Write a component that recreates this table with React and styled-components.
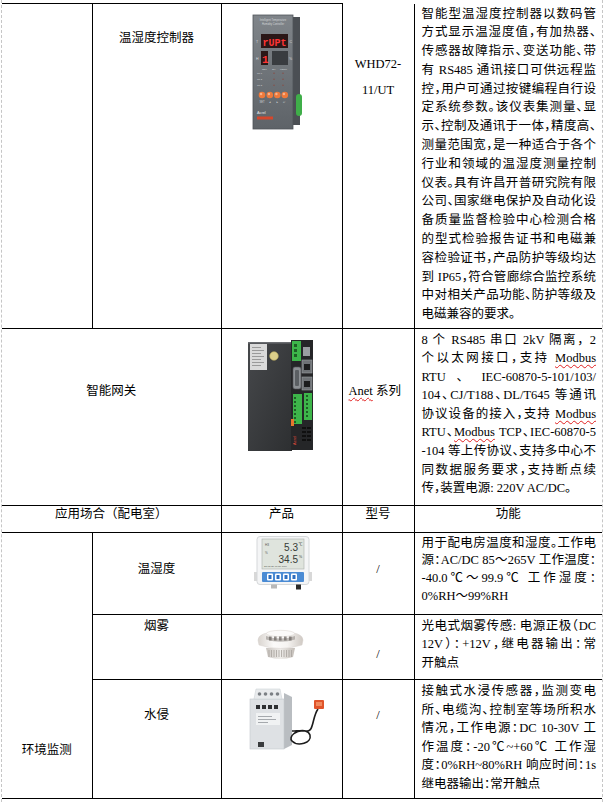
import React from "react";
import styled, { createGlobalStyle } from "styled-components";

const GlobalStyle = createGlobalStyle`
  html, body {
    margin: 0;
    padding: 0;
    background: #ffffff;
  }
  body {
    font-family: "Liberation Serif", "Noto Sans CJK SC", serif;
    color: #000;
  }
`;

const Page = styled.div`
  box-sizing: border-box;
  width: 602px;
  height: 802px;
  margin-left: 1px;
  padding-top: 3px;
  border-left: 1px dashed #c6c6c6;
  border-right: 1px dashed #c6c6c6;
  overflow: hidden;
`;

const Sheet = styled.table`
  width: 600px;
  border-collapse: collapse;
  table-layout: fixed;
  font-size: 12.5px;
`;

const Col = styled.col`
  width: ${(p) => p.$w}px;
`;

const Row = styled.tr`
  height: ${(p) => p.$h}px;
`;

const Cell = styled.td`
  padding: ${(p) => p.$pt || 0}px 0 0 ${(p) => p.$pl || 0}px;
  border-top: ${(p) => (p.$noTop ? "none" : "1px solid #000")};
  border-left: ${(p) => (p.$noLeft ? "none" : "1px solid #000")};
  border-right: ${(p) => (p.$noRight ? "none" : "1px solid #000")};
  border-bottom: 1px solid #000;
  vertical-align: top;
  text-align: ${(p) => p.$align || "center"};
  line-height: ${(p) => p.$lh || 18}px;
`;

const Desc = styled(Cell)`
  padding-left: 7px;
  padding-right: 6px;
  text-align: left;
  font-feature-settings: "halt";
`;

const Line = styled.div`
  text-align: justify;
  text-align-last: ${(p) => (p.$last ? "start" : "justify")};
`;

const Squiggle = styled.span`
  text-decoration: underline wavy #e02020;
  text-decoration-thickness: 1px;
  text-underline-offset: 2px;
`;

const Pic = styled.svg`
  display: block;
`;

function Lines({ items }) {
  return items.map((item, i) => (
    <Line key={i} $last={i === items.length - 1}>
      {item}
    </Line>
  ));
}

const M = () => <Squiggle>Modbus</Squiggle>;

function ControllerPic() {
  const tiny = { fontFamily: "Liberation Sans", fill: "#d4d7da" };
  return (
    <Pic width="50" height="116" viewBox="0 0 50 116">
      <defs>
        <linearGradient id="ctlFace" x1="0" y1="0" x2="0" y2="1">
          <stop offset="0" stopColor="#80858a" />
          <stop offset="1" stopColor="#5e6368" />
        </linearGradient>
      </defs>
      <rect x="39" y="3" width="9" height="108" fill="#4b4f54" />
      <rect x="44" y="80" width="6" height="22" rx="3" fill="#3fae49" />
      <rect x="1" y="1" width="40" height="114" fill="url(#ctlFace)" stroke="#4f5459" strokeWidth="0.8" />
      <text x="21" y="7" fontSize="2.6" textAnchor="middle" style={tiny}>Intelligent Temperature</text>
      <text x="21" y="10.5" fontSize="2.6" textAnchor="middle" style={tiny}>Humidity Controller</text>
      <rect x="9" y="20" width="27" height="14" fill="#2b1717" />
      <text x="10.5" y="31.5" fontSize="11.5" fontWeight="700" fill="#ff3434" fontFamily="Liberation Mono" textLength="24" lengthAdjust="spacingAndGlyphs">rUPt</text>
      <text x="4" y="29" fontSize="3.5" style={tiny}>T</text>
      <text x="37.5" y="29" fontSize="3.5" style={tiny}>C</text>
      <rect x="9" y="37" width="7" height="14" fill="#2b1717" />
      <text x="10" y="48.5" fontSize="11" fontWeight="700" fill="#ff3434" fontFamily="Liberation Mono">1</text>
      <rect x="20" y="37" width="16" height="14" fill="#393c40" />
      <text x="4" y="46" fontSize="3.5" style={tiny}>H</text>
      <text x="37" y="46" fontSize="3.5" style={tiny}>%</text>
      <text x="10" y="56" fontSize="2.4" style={tiny}>SET</text>
      <text x="20" y="56" fontSize="2.4" style={tiny}>Sel</text>
      <text x="28" y="56" fontSize="2.4" style={tiny}>MENU</text>
      {[60, 66, 72].map((y, i) => (
        <g key={y}>
          <text x="5" y={y} fontSize="2.4" style={tiny}>{`Ch ${i + 1}`}</text>
          <circle cx="22" cy={y - 0.8} r="0.7" fill="#8a4b43" />
          <circle cx="31" cy={y - 0.8} r="0.7" fill="#8a4b43" />
        </g>
      ))}
      {[10, 17.8, 25.3, 32.8].map((cx) => (
        <g key={cx}>
          <circle cx={cx} cy="81" r="3.3" fill="#ef7a3b" />
          <circle cx={cx - 0.9} cy="80" r="1.2" fill="#f8b38c" />
        </g>
      ))}
      <text x="7.5" y="89" fontSize="2.6" style={tiny}>SET</text>
      <text x="16.5" y="89" fontSize="2.6" style={tiny}>◄</text>
      <text x="24" y="89" fontSize="2.6" style={tiny}>►</text>
      <text x="31" y="89" fontSize="2.6" style={tiny}>↵</text>
      <text x="5" y="100" fontSize="3.8" fill="#eaeaea" fontFamily="Liberation Sans">Acrel</text>
      <rect x="5" y="102.5" width="16" height="3" fill="#d5472c" />
    </Pic>
  );
}

function GatewayPic() {
  return (
    <Pic width="66" height="114" viewBox="0 0 66 114">
      <defs>
        <linearGradient id="gwFace" x1="0" y1="0" x2="1" y2="1">
          <stop offset="0" stopColor="#46484b" />
          <stop offset="1" stopColor="#2d2f31" />
        </linearGradient>
      </defs>
      <rect x="1" y="3" width="44" height="109" fill="url(#gwFace)" />
      <rect x="1" y="3" width="44" height="1.5" fill="#6a6c70" />
      <rect x="44" y="1" width="22" height="110" fill="#252628" />
      <rect x="3" y="5" width="17" height="26" fill="#dadada" />
      {[8, 11, 14, 17, 20, 23, 26].map((y) => (
        <rect key={y} x="5" y={y} width={y % 2 ? 12 : 9} height="1" fill="#9a9a9a" />
      ))}
      <circle cx="27" cy="17" r="4.3" fill="#dccf8a" stroke="#b5a65a" strokeWidth="0.6" />
      <rect x="45" y="2" width="9" height="20" fill="#3db54a" />
      {[5, 10, 15].map((y) => (
        <rect key={y} x="47" y={y} width="3" height="3" fill="#1d5f25" />
      ))}
      <rect x="46" y="28" width="8" height="22" rx="2" fill="#8c9094" stroke="#505356" strokeWidth="0.6" />
      <rect x="48" y="31" width="4" height="16" rx="1" fill="#5b5f63" />
      <rect x="46" y="55" width="9" height="30" fill="#3db54a" />
      {[58, 62, 66, 70, 74, 78, 82].map((y) => (
        <rect key={y} x="47" y={y} width="2" height="2" fill="#1d5f25" />
      ))}
      <rect x="44" y="80" width="3" height="7" fill="#e8762e" />
      <rect x="56" y="8" width="7" height="9" fill="#9a9ea2" />
      <rect x="55" y="21" width="10" height="13" fill="#6e7276" stroke="#9a9ea2" strokeWidth="0.6" />
      <rect x="57" y="25" width="6" height="6" fill="#1b1c1d" />
      <rect x="55" y="38" width="10" height="13" fill="#6e7276" stroke="#9a9ea2" strokeWidth="0.6" />
      <rect x="57" y="42" width="6" height="6" fill="#1b1c1d" />
      <rect x="57" y="54" width="8" height="27" fill="#3db54a" />
      {[56, 60, 64, 68, 72, 76].map((y) => (
        <rect key={y} x="59" y={y} width="2" height="2" fill="#1d5f25" />
      ))}
      {[88, 92, 96, 100].map((y) => (
        <g key={y}>
          <rect x="55" y={y} width="4" height="2" fill="#101010" />
          <rect x="60" y={y} width="4" height="2" fill="#101010" />
        </g>
      ))}
      <text x="49" y="106" fontSize="4" fill="#e04a3a" fontFamily="Liberation Sans" transform="rotate(-90 49 106)">Acrel</text>
    </Pic>
  );
}

function ThermoPic() {
  return (
    <Pic width="58" height="54" viewBox="0 0 58 54">
      <rect x="0" y="36" width="3" height="9" fill="#d8d8d8" />
      <rect x="55" y="36" width="3" height="9" fill="#d8d8d8" />
      <rect x="3" y="0.5" width="52" height="48" rx="3" fill="#f4f5f6" stroke="#d5d8da" />
      <rect x="8" y="3" width="42" height="30" fill="#dfe4dd" stroke="#aab0aa" strokeWidth="0.6" />
      <text x="11" y="10" fontSize="3.2" fill="#555" fontFamily="Liberation Sans">H3</text>
      <text x="11" y="18" fontSize="3" fill="#555" fontFamily="Liberation Sans">%</text>
      <text x="44" y="15" fontSize="10" textAnchor="end" fill="#363b36" fontFamily="Liberation Sans">5.3</text>
      <text x="44.5" y="9.5" fontSize="4" fill="#363b36" fontFamily="Noto Sans CJK SC">℃</text>
      <text x="44" y="27" fontSize="10" textAnchor="end" fill="#363b36" fontFamily="Liberation Sans">34.5</text>
      <text x="45" y="21.5" fontSize="3.5" fill="#363b36" fontFamily="Liberation Sans">%</text>
      <text x="10" y="31" fontSize="2.5" fill="#555" fontFamily="Liberation Sans">25-12-20 07:50 RTU</text>
      <rect x="8" y="36" width="42" height="10" rx="1" fill="#4a8bd4" />
      {[13, 21, 29, 37].map((x) => (
        <g key={x}>
          <rect x={x} y="37.5" width="6" height="7" rx="1" fill="#ffffff" />
          <rect x={x + 1.5} y="39" width="3" height="4" fill="#2f6fc0" />
        </g>
      ))}
      <rect x="17" y="48.5" width="6" height="4" fill="#b8b8b8" />
      <rect x="42" y="48.5" width="5" height="5" fill="#2a2a2a" />
    </Pic>
  );
}

function SmokePic() {
  return (
    <Pic width="49" height="34" viewBox="0 0 49 34">
      <defs>
        <linearGradient id="dome" x1="0" y1="0" x2="1" y2="0">
          <stop offset="0" stopColor="#d9d4cf" />
          <stop offset="0.35" stopColor="#fbfaf9" />
          <stop offset="0.65" stopColor="#f6f4f2" />
          <stop offset="1" stopColor="#cfc9c3" />
        </linearGradient>
        <linearGradient id="base" x1="0" y1="0" x2="1" y2="0">
          <stop offset="0" stopColor="#c9c4bf" />
          <stop offset="0.5" stopColor="#eeece9" />
          <stop offset="1" stopColor="#c2bcb6" />
        </linearGradient>
      </defs>
      <path d="M10 21 L39 21 L37 30 Q24.5 34 12 30 Z" fill="url(#base)" />
      {[13, 15.5, 18, 20.5, 23, 25.5, 28, 30.5, 33, 35.5].map((x) => (
        <line key={x} x1={x} y1="23" x2={x} y2="30" stroke="#a8a39e" strokeWidth="0.8" />
      ))}
      <path d="M2 13 Q2 5 24.5 4.5 Q47 5 47 13 L46 18 Q24.5 25 3 18 Z" fill="url(#dome)" stroke="#d6d1cc" strokeWidth="0.5" />
      <ellipse cx="24.5" cy="6.5" rx="14" ry="3.2" fill="#fbfaf9" stroke="#ddd8d3" strokeWidth="0.6" />
      <path d="M10 9 Q24.5 14 39 9 L39 12.5 Q24.5 17 10 12.5 Z" fill="#8f8a85" opacity="0.55" />
      {[13, 18, 23, 28, 33].map((x) => (
        <rect key={x} x={x} y="9.5" width="2.6" height="4" fill="#6f6a66" opacity="0.75" />
      ))}
    </Pic>
  );
}

function FloodPic() {
  return (
    <Pic width="77" height="64" viewBox="0 0 77 64">
      <polygon points="36,6 44,10 44,58 36,62" fill="#b9bdc1" />
      <rect x="2" y="12" width="34" height="50" fill="#dee1e4" stroke="#c4c8cc" strokeWidth="0.6" />
      <polygon points="6,12 8,2 32,2 34,12" fill="#e9ebed" stroke="#cfd3d6" strokeWidth="0.6" />
      {[12, 18, 24, 30].map((x) => (
        <circle key={x} cx={x - 0.5} cy="7" r="1.8" fill="#7c8085" />
      ))}
      {[8, 14, 20, 26].map((x) => (
        <rect key={x} x={x} y="18" width="4" height="4" fill="#2d2f31" />
      ))}
      <rect x="8" y="26" width="24" height="12" fill="#f0f2f3" />
      <rect x="10" y="29" width="14" height="1" fill="#a5a9ad" />
      <rect x="10" y="32" width="18" height="1" fill="#a5a9ad" />
      <rect x="10" y="35" width="10" height="1" fill="#a5a9ad" />
      <rect x="10" y="55" width="6" height="5" fill="#3a3c3e" />
      <path d="M44 44 C52 44 60 42 62 48 C64 56 50 60 44 54 C40 50 48 42 58 44 C66 46 64 30 70 22" stroke="#1c1c1c" strokeWidth="1.6" fill="none" />
      <rect x="66" y="13" width="10" height="9" rx="1" fill="#e0542a" />
      <rect x="68" y="15" width="6" height="4" fill="#f08a5e" />
    </Pic>
  );
}

export default function App() {
  return (
    <>
      <GlobalStyle />
      <Page>
        <Sheet>
          <colgroup>
            <Col $w={90} />
            <Col $w={129} />
            <Col $w={121} />
            <Col $w={72} />
            <Col $w={188} />
          </colgroup>
          <tbody>
            <Row $h={325}>
              <Cell $noLeft />
              <Cell $pt={25}>温湿度控制器</Cell>
              <Cell $align="left" $pt={10} $pl={30}>
                <ControllerPic />
              </Cell>
              <Cell $noTop $pt={47} $lh={26.7}>
                WHD72-
                <br />
                11/UT
              </Cell>
              <Desc $noTop $noRight $pt={1} $lh={18.8}>
                <Lines
                  items={[
                    "智能型温湿度控制器以数码管",
                    "方式显示温湿度值，有加热器、",
                    "传感器故障指示、变送功能、带",
                    "有 RS485 通讯接口可供远程监",
                    "控，用户可通过按键编程自行设",
                    "定系统参数。该仪表集测量、显",
                    "示、控制及通讯于一体，精度高、",
                    "测量范围宽，是一种适合于各个",
                    "行业和领域的温湿度测量控制",
                    "仪表。具有许昌开普研究院有限",
                    "公司、国家继电保护及自动化设",
                    "备质量监督检验中心检测合格",
                    "的型式检验报告证书和电磁兼",
                    "容检验证书，产品防护等级均达",
                    "到 IP65，符合管廊综合监控系统",
                    "中对相关产品功能、防护等级及",
                    "电磁兼容的要求。",
                  ]}
                />
              </Desc>
            </Row>
            <Row $h={177}>
              <Cell $noLeft colSpan={2} $pt={53}>
                智能网关
              </Cell>
              <Cell $align="left" $pt={10} $pl={25}>
                <GatewayPic />
              </Cell>
              <Cell $align="left" $pt={53} $pl={6}>
                <Squiggle>Anet</Squiggle> 系列
              </Cell>
              <Desc $noRight $pt={1.5} $lh={18.6}>
                <Lines
                  items={[
                    "8 个 RS485 串口 2kV 隔离， 2",
                    <>个以太网接口，支持 <M /></>,
                    "RTU 、 IEC-60870-5-101/103/",
                    "104、CJ/T188、DL/T645 等通讯",
                    <>协议设备的接入，支持 <M /></>,
                    <>RTU、<M /> TCP、IEC-60870-5</>,
                    "-104 等上传协议、支持多中心不",
                    "同数据服务要求，支持断点续",
                    "传，装置电源: 220V AC/DC。",
                  ]}
                />
              </Desc>
            </Row>
            <Row $h={27}>
              <Cell $noLeft colSpan={2} $lh={17}>
                应用场合（配电室）
              </Cell>
              <Cell $lh={17}>产品</Cell>
              <Cell $lh={17}>型号</Cell>
              <Cell $noRight $lh={17}>
                功能
              </Cell>
            </Row>
            <Row $h={82}>
              <Cell $noLeft rowSpan={3} $pt={208}>
                环境监测
              </Cell>
              <Cell $pt={27}>温湿度</Cell>
              <Cell $align="left" $pt={3} $pl={32}>
                <ThermoPic />
              </Cell>
              <Cell $pt={27}>/</Cell>
              <Desc $noRight $pt={1.5} $lh={17.8}>
                <Lines
                  items={[
                    "用于配电房温度和湿度。工作电",
                    "源：AC/DC 85～265V 工作温度：",
                    "-40.0℃～99.9℃ 工作湿度：",
                    "0%RH～99%RH",
                  ]}
                />
              </Desc>
            </Row>
            <Row $h={65}>
              <Cell $pt={2}>烟雾</Cell>
              <Cell $align="left" $pt={12} $pl={34}>
                <SmokePic />
              </Cell>
              <Cell $pt={30}>/</Cell>
              <Desc $noRight $pt={2} $lh={18.3}>
                <Lines
                  items={[
                    "光电式烟雾传感: 电源正极（DC",
                    "12V）：+12V，继电器输出：常",
                    "开触点",
                  ]}
                />
              </Desc>
            </Row>
            <Row $h={119}>
              <Cell $pt={26}>水侵</Cell>
              <Cell $align="left" $pt={7} $pl={26}>
                <FloodPic />
              </Cell>
              <Cell $pt={26}>/</Cell>
              <Desc $noRight $pt={2} $lh={18.5}>
                <Lines
                  items={[
                    "接触式水浸传感器，监测变电",
                    "所、电缆沟、控制室等场所积水",
                    "情况，工作电源：DC 10-30V 工",
                    "作温度：-20℃~+60℃ 工作湿",
                    "度：0%RH~80%RH  响应时间：1s",
                    "继电器输出：常开触点",
                  ]}
                />
              </Desc>
            </Row>
          </tbody>
        </Sheet>
      </Page>
    </>
  );
}
